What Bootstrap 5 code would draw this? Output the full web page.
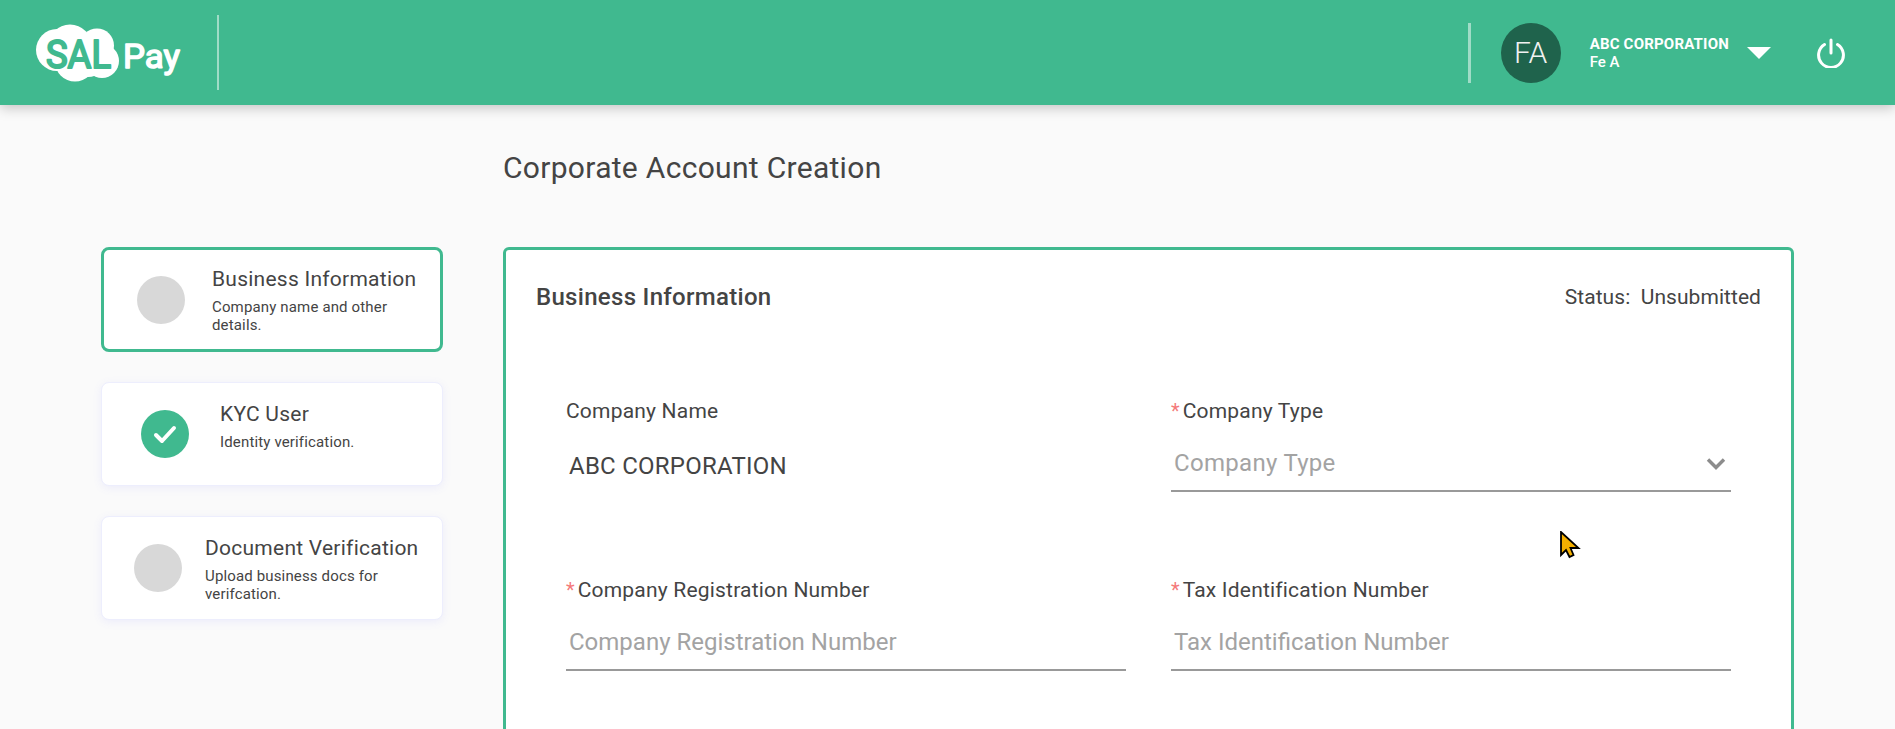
<!DOCTYPE html>
<html lang="en">
<head>
  <meta charset="UTF-8" />
  <meta name="viewport" content="width=device-width, initial-scale=1" />
  <title>Corporate Account Creation</title>
  <link href="https://cdn.jsdelivr.net/npm/bootstrap@5.3.0/dist/css/bootstrap.min.css" rel="stylesheet" />
  <style>
    html, body {
      height: 100%;
      overflow: hidden;
    }
    body {
      background-color: #fafafa;
      font-family: 'Roboto', sans-serif;
      color: #444;
    }
    .top-bar {
      height: 105px;
      background-color: #40b98f;
      box-shadow: 0 3px 12px rgba(0, 0, 0, .22);
      padding-left: 36px;
      padding-right: 49px;
      position: relative;
    }
    .logo-svg {
      width: 145px;
      height: 60px;
    }
    .logo-sep {
      width: 2px;
      height: 75px;
      margin-left: 36px;
      background-color: rgba(255, 255, 255, .5);
    }
    .user-sep {
      width: 3px;
      height: 60px;
      margin-right: 30px;
      background-color: rgba(255, 255, 255, .5);
    }
    .user-avatar {
      width: 60px;
      height: 60px;
      border-radius: 50%;
      background-color: #1f634c;
      color: #f1f1f1;
      font-size: 30px;
      font-weight: 300;
      margin-right: 29px;
    }
    .user-name {
      font-size: 15px;
      font-weight: 700;
      line-height: 18px;
      letter-spacing: .2px;
      color: #fff;
    }
    .user-role {
      font-size: 15px;
      font-weight: 500;
      line-height: 18px;
      color: #fff;
    }
    .user-caret {
      width: 0;
      height: 0;
      margin-left: 18px;
      margin-right: 45px;
      border-left: 12.5px solid transparent;
      border-right: 12.5px solid transparent;
      border-top: 12.5px solid #fff;
    }
    .page-body {
      padding-left: 101px;
      gap: 60px;
    }
    .side-col {
      width: 342px;
      padding-top: 142px;
      gap: 30px;
    }
    .step-card {
      height: 104px;
      background-color: #fff;
      border: 1px solid #edeefd;
      border-radius: 8px;
      box-shadow: 0 2px 8px rgba(120, 120, 255, .1);
    }
    .step-active {
      border: 3px solid #40b98f;
      box-shadow: none;
      height: 105px;
    }
    .step-one { padding-left: 33px; gap: 27px; }
    .step-two { padding-left: 39px; gap: 31px; }
    .step-three { padding-left: 32px; gap: 23px; }
    .step-dot {
      width: 48px;
      height: 48px;
      border-radius: 50%;
      background-color: #d8d8d8;
      flex-shrink: 0;
    }
    .step-done {
      background-color: #40b98f;
    }
    .step-text {
      padding-top: 2px;
    }
    .step-title {
      font-size: 21px;
      line-height: 24px;
      letter-spacing: .25px;
      margin-bottom: 7px;
      white-space: nowrap;
    }
    .step-sub {
      font-size: 15px;
      line-height: 18px;
      letter-spacing: .15px;
      max-width: 205px;
      min-height: 36px;
    }
    .main-col {
      width: 1291px;
    }
    .page-title {
      font-size: 30px;
      font-weight: 400;
      line-height: 34px;
      letter-spacing: .3px;
      margin: 0;
      padding-top: 46px;
      height: 142px;
    }
    .form-card {
      height: 700px;
      background-color: #fff;
      border: 3px solid #40b98f;
      border-radius: 6px;
      padding: 32px 30px 30px;
    }
    .form-title {
      font-size: 24px;
      font-weight: 500;
      line-height: 30px;
      letter-spacing: .3px;
      margin: 0;
    }
    .form-status {
      font-size: 21px;
      line-height: 30px;
      letter-spacing: .05px;
    }
    .field-grid {
      display: grid;
      grid-template-columns: 560px 560px;
      column-gap: 45px;
      row-gap: 86px;
      margin-top: 87px;
      margin-left: 30px;
    }
    .field-label {
      font-size: 21px;
      line-height: 24px;
      letter-spacing: .2px;
      margin-bottom: 16px;
      display: block;
    }
    .field-star {
      color: #f47a7a;
      font-size: 20px;
      letter-spacing: 0;
      margin-right: 3px;
    }
    .field-input, .field-input:focus {
      height: 53px;
      padding: 0 3px 3px;
      font-family: 'Roboto', sans-serif;
      font-size: 24px;
      letter-spacing: 0;
      color: #444;
      background-color: transparent;
      border: 0;
      border-bottom: 2px solid #999;
      border-radius: 0;
      box-shadow: none;
    }
    .field-input::placeholder {
      color: #a3a3a3;
    }
    .field-static {
      height: 53px;
      padding: 0 3px;
      font-size: 24px;
      letter-spacing: .25px;
    }
    .field-select {
      color: #a3a3a3;
      letter-spacing: .3px;
    }
    .field-chevron {
      position: absolute;
      right: 5px;
      top: 18px;
      pointer-events: none;
    }
    .mouse-pointer {
      position: absolute;
      left: 1560px;
      top: 531px;
    }
  </style>
</head>
<body>

  <header class="top-bar d-flex align-items-center">
    <svg class="logo-svg" viewBox="0 0 145 60" role="img" aria-label="SALPay">
      <g fill="#fff">
        <circle cx="21" cy="27" r="21" />
        <circle cx="34" cy="23.500" r="22" />
        <circle cx="61" cy="22.500" r="17" />
        <circle cx="66" cy="38" r="17" />
        <circle cx="39" cy="38.500" r="20" />
        <circle cx="52" cy="36" r="18" />
      </g>
      <text x="10" y="45" font-family="Roboto, sans-serif" font-size="38" font-weight="400" fill="#40b98f" stroke="#40b98f" stroke-width="2" stroke-linejoin="round" textLength="65" lengthAdjust="spacingAndGlyphs">SAL</text>
      <text x="87" y="44.500" font-family="Roboto, sans-serif" font-size="34" font-weight="400" fill="#fff" stroke="#fff" stroke-width="1.500" stroke-linejoin="round" textLength="57" lengthAdjust="spacingAndGlyphs">Pay</text>
    </svg>
    <div class="logo-sep"></div>

    <div class="user-sep ms-auto"></div>
    <div class="user-avatar d-flex align-items-center justify-content-center">FA</div>
    <div>
      <div class="user-name">ABC CORPORATION</div>
      <div class="user-role">Fe A</div>
    </div>
    <div class="user-caret"></div>
    <svg width="30" height="30" viewBox="0 0 30 30" fill="none" stroke="#fff" stroke-width="3" stroke-linecap="round">
      <path d="M15 2v13" />
      <path d="M8.500 6.500a12.400 12.400 0 1 0 13 0" />
    </svg>
  </header>

  <div class="page-body d-flex">
    <aside class="side-col d-flex flex-column">
      <div class="step-card step-active step-one d-flex align-items-center">
        <div class="step-dot"></div>
        <div class="step-text">
          <div class="step-title">Business Information</div>
          <div class="step-sub">Company name and other details.</div>
        </div>
      </div>
      <div class="step-card step-two d-flex align-items-center">
        <div class="step-dot step-done d-flex align-items-center justify-content-center">
          <svg width="24" height="20" viewBox="0 0 24 20" fill="none" stroke="#fff" stroke-width="4" stroke-linecap="round" stroke-linejoin="round">
            <path d="M3 11l6 6L21 4" />
          </svg>
        </div>
        <div class="step-text">
          <div class="step-title">KYC User</div>
          <div class="step-sub">Identity verification.</div>
        </div>
      </div>
      <div class="step-card step-three d-flex align-items-center">
        <div class="step-dot"></div>
        <div class="step-text">
          <div class="step-title">Document Verification</div>
          <div class="step-sub">Upload business docs for verifcation.</div>
        </div>
      </div>
    </aside>

    <main class="main-col">
      <h1 class="page-title">Corporate Account Creation</h1>
      <section class="form-card">
        <div class="d-flex justify-content-between align-items-center">
          <h2 class="form-title">Business Information</h2>
          <div class="form-status">Status:&nbsp; Unsubmitted</div>
        </div>
        <div class="field-grid">
          <div>
            <label class="field-label">Company Name</label>
            <div class="field-static d-flex align-items-center">ABC CORPORATION</div>
          </div>
          <div>
            <label class="field-label"><span class="field-star">*</span>Company Type</label>
            <div class="position-relative">
              <div class="form-control field-input field-select d-flex align-items-center">Company Type</div>
              <svg class="field-chevron" width="20" height="14" viewBox="0 0 20 14" fill="none" stroke="#8c8c8c" stroke-width="3.400">
                <path d="M2 2.500l8 8 8-8" />
              </svg>
            </div>
          </div>
          <div>
            <label class="field-label"><span class="field-star">*</span>Company Registration Number</label>
            <input class="form-control field-input" type="text" placeholder="Company Registration Number" />
          </div>
          <div>
            <label class="field-label"><span class="field-star">*</span>Tax Identification Number</label>
            <input class="form-control field-input" type="text" placeholder="Tax Identification Number" />
          </div>
        </div>
      </section>
    </main>
  </div>

  <svg class="mouse-pointer" width="22" height="28" viewBox="0 0 22 28">
    <path d="M1 1v23l5-5 3.500 7 4-2-3-7h8z" fill="#f5b000" stroke="#000" stroke-width="1.800" stroke-linejoin="miter" />
  </svg>

  <script src="https://cdn.jsdelivr.net/npm/bootstrap@5.3.0/dist/js/bootstrap.bundle.min.js"></script>
</body>
</html>
